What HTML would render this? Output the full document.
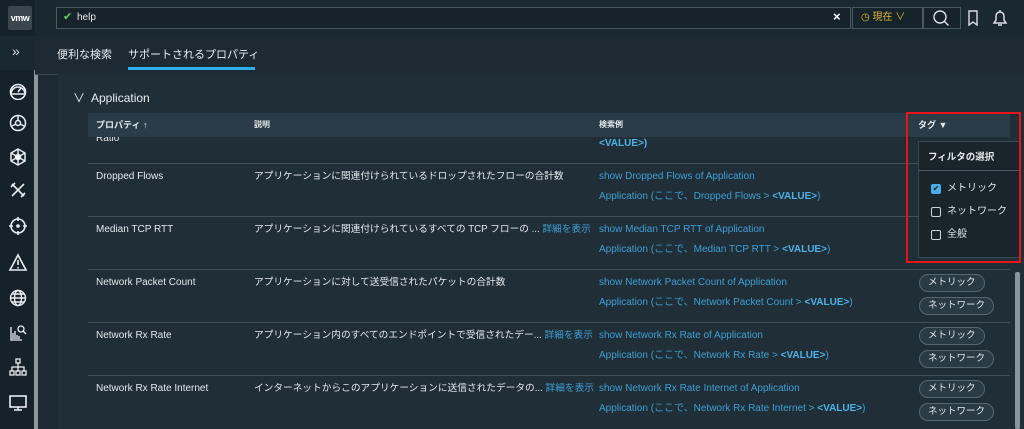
<!DOCTYPE html>
<html><head><meta charset="utf-8"><style>
*{margin:0;padding:0;box-sizing:border-box}
body{width:1024px;height:429px;overflow:hidden;background:#1d2a33;font-family:"Liberation Sans","Noto Sans CJK JP",sans-serif;color:#e3e8eb;position:relative;font-size:10px;line-height:12px}
.abs{position:absolute}
#side{left:0;top:0;width:35px;height:429px;background:#16222a}
#top{left:35px;top:0;width:989px;height:36px;background:#1a2830}
#tabs{left:35px;top:36px;width:989px;height:38px;background:#1d2a33}
.ic{position:absolute;left:8px;width:20px;height:20px}
#panel{left:58px;top:74px;width:966px;height:355px;background:#202e38}
.row{position:absolute;left:88px;width:922px;height:53px;border-top:1px solid #3e4f5a}
.c1{position:absolute;left:8px;top:7px;font-size:10px;color:#e3e8eb}
.c2{position:absolute;left:166px;top:7px;font-size:9.7px;color:#e3e8eb;white-space:nowrap}
.c3{position:absolute;left:511px;top:7px;font-size:10px;color:#3f9fd3}
.c4{position:absolute;left:511px;top:27px;font-size:10px;color:#3f9fd3}
.c4 b{color:#4fb2e6}
.more{color:#3f9fd3}
.pill{position:absolute;left:831px;height:18px;border:1px solid #56666f;border-radius:9px;background:#2b3b45;font-size:9.5px;padding:2px 8px;color:#e3e8eb;white-space:nowrap}
</style></head><body>
<div id="side" class="abs">
 <div class="abs" style="left:8px;top:6px;width:24px;height:24px;background:#3a464d;border-radius:2px;font-size:9px;font-weight:bold;color:#fff;text-align:center;line-height:24px;letter-spacing:-0.5px">vmw</div>
 <div class="abs" style="left:0;top:36px;width:35px;height:34px;background:#1a2830"></div>
 <div class="abs" style="left:12px;top:45px;font-size:14px;color:#dde">»</div>
 <div class="abs" style="left:34px;top:70px;width:4px;height:359px;background:#8b969c"></div>
 <svg class="ic" style="top:80px" viewBox="0 0 20 20" fill="none" stroke="#e8eef2" stroke-width="1.6"><path d="M3 14a7 7 0 1 1 14 0"/><path d="M3 14h14M10 12l3-4"/><circle cx="10" cy="12" r="7.5"/></svg>
 <svg class="ic" style="top:113px" viewBox="0 0 20 20" fill="none" stroke="#e8eef2" stroke-width="1.5"><circle cx="10" cy="10" r="7.5"/><path d="M10 3v4M4 13l4-2M16 13l-4-2"/><circle cx="10" cy="10" r="2.5"/></svg>
 <svg class="ic" style="top:147px" viewBox="0 0 20 20" fill="none" stroke="#e8eef2" stroke-width="1.5"><path d="M10 2l7 4v8l-7 4-7-4V6z"/><path d="M10 2v16M3 6l14 8M17 6L3 14"/><circle cx="10" cy="10" r="2.5" fill="#fff"/></svg>
 <svg class="ic" style="top:180px" viewBox="0 0 20 20" fill="none" stroke="#e8eef2" stroke-width="1.6"><path d="M4 4l12 12M16 4L4 16M3 7l4-4M13 17l4-4"/></svg>
 <svg class="ic" style="top:216px" viewBox="0 0 20 20" fill="none" stroke="#e8eef2" stroke-width="1.6"><circle cx="10" cy="10" r="7"/><path d="M10 1v4M10 15v4M1 10h4M15 10h4"/><circle cx="10" cy="10" r="1" fill="#fff"/></svg>
 <svg class="ic" style="top:253px" viewBox="0 0 20 20" fill="none" stroke="#e8eef2" stroke-width="1.6"><path d="M10 2L18 17H2z"/><path d="M10 7v5M10 14v1.5"/></svg>
 <svg class="ic" style="top:288px" viewBox="0 0 20 20" fill="none" stroke="#e8eef2" stroke-width="1.4"><circle cx="10" cy="10" r="7.5"/><ellipse cx="10" cy="10" rx="3.5" ry="7.5"/><path d="M2.5 10h15M4 6h12M4 14h12"/></svg>
 <svg class="ic" style="top:322px" viewBox="0 0 20 20" fill="none" stroke="#e8eef2" stroke-width="1.3"><path d="M3 5v13h11M5 17v-6M7 17v-8M9 17v-4M11 17v-3"/><circle cx="13" cy="7" r="3"/><path d="M15 9l3 3"/></svg>
 <svg class="ic" style="top:357px" viewBox="0 0 20 20" fill="none" stroke="#e8eef2" stroke-width="1.3"><rect x="8" y="2" width="4" height="4"/><rect x="2" y="14" width="4" height="4"/><rect x="8" y="14" width="4" height="4"/><rect x="14" y="14" width="4" height="4"/><path d="M10 6v8M4 14v-4h12v4"/></svg>
 <svg class="ic" style="top:393px" viewBox="0 0 20 20" fill="none" stroke="#e8eef2" stroke-width="1.6"><rect x="2" y="3" width="16" height="11"/><path d="M10 14v3M6 17h8"/></svg>
</div>
<div id="top" class="abs">
 <div class="abs" style="left:21px;top:7px;width:795px;height:22px;border:1px solid #4a5a64;background:#17232a"></div>
 <div class="abs" style="left:28px;top:11px;font-size:11px;color:#5fcf5f">✔</div>
 <div class="abs" style="left:42px;top:12px;font-size:10px;color:#e8ecef">help</div>
 <div class="abs" style="left:798px;top:11px;font-size:13px;font-weight:bold;color:#fff">×</div>
 <div class="abs" style="left:817px;top:7px;width:71px;height:22px;border:1px solid #4a5a64;background:#17232a"></div>
 <div class="abs" style="left:826px;top:12px;font-size:10px;color:#e0b838">◷ 現在 ∨</div>
 <div class="abs" style="left:888px;top:7px;width:38px;height:22px;border:1px solid #4a5a64;background:#17232a"></div>
 <svg class="abs" style="left:897px;top:9px" width="18" height="18" viewBox="0 0 18 18" fill="none" stroke="#dde" stroke-width="1.4"><circle cx="8" cy="8" r="6"/><path d="M12.5 12.5l4 4"/></svg>
 <svg class="abs" style="left:932px;top:10px" width="12" height="16" viewBox="0 0 12 16" fill="none" stroke="#dde" stroke-width="1.4"><path d="M2 1h8v14l-4-3-4 3z"/></svg>
 <svg class="abs" style="left:955px;top:8px" width="20" height="20" viewBox="0 0 20 20" fill="none" stroke="#dde" stroke-width="1.5"><path d="M4 15h12l-2-3V8a4 4 0 0 0-8 0v4z"/><path d="M8 17h4M10 2v2"/></svg>
</div>
<div id="tabs" class="abs">
 <div class="abs" style="left:22px;top:13px;font-size:11px;color:#e8ecef">便利な検索</div>
 <div class="abs" style="left:93px;top:13px;font-size:11px;color:#e8ecef">サポートされるプロパティ</div>
 <div class="abs" style="left:93px;top:31px;width:127px;height:3px;background:#2fb0ea"></div>
</div>
<div class="abs" style="left:35px;top:74px;width:989px;height:1px;background:#3a4a55"></div>
<div id="panel" class="abs"></div>
<div class="abs" style="left:73px;top:91px;font-size:12px;line-height:14px;color:#e8ecef">∨&nbsp; Application</div>
<div class="abs" style="left:88px;top:113px;width:922px;height:24px;background:#2a3c47">
 <div class="abs" style="left:8px;top:6px;font-size:9px;font-weight:bold">プロパティ ↑</div>
 <div class="abs" style="left:166px;top:6px;font-size:8px;font-weight:bold">説明</div>
 <div class="abs" style="left:511px;top:6px;font-size:8px;font-weight:bold">検索例</div>
 <div class="abs" style="left:830px;top:6px;font-size:9px;font-weight:bold">タグ ▼</div>
</div>
<div class="abs" style="left:88px;top:137px;width:922px;height:26px;overflow:hidden">
 <div class="abs" style="left:8px;top:-4px;font-size:10px">Ratio</div>
 <div class="abs" style="left:511px;top:1px;font-size:10px;color:#4fb2e6;font-weight:bold">&lt;VALUE&gt;)</div>
</div>
<div class="row" style="top:163px"><div class="c1">Dropped Flows</div><div class="c2">アプリケーションに関連付けられているドロップされたフローの合計数</div><div class="c3">show Dropped Flows of Application</div><div class="c4">Application (ここで、Dropped Flows &gt; <b>&lt;VALUE&gt;</b>)</div></div>
<div class="row" style="top:216px"><div class="c1">Median TCP RTT</div><div class="c2">アプリケーションに関連付けられているすべての TCP フローの ... <span class="more">詳細を表示</span></div><div class="c3">show Median TCP RTT of Application</div><div class="c4">Application (ここで、Median TCP RTT &gt; <b>&lt;VALUE&gt;</b>)</div></div>
<div class="row" style="top:269px"><div class="c1">Network Packet Count</div><div class="c2">アプリケーションに対して送受信されたパケットの合計数</div><div class="c3">show Network Packet Count of Application</div><div class="c4">Application (ここで、Network Packet Count &gt; <b>&lt;VALUE&gt;</b>)</div>
 <div class="pill" style="top:4px">メトリック</div><div class="pill" style="top:27px">ネットワーク</div></div>
<div class="row" style="top:322px"><div class="c1">Network Rx Rate</div><div class="c2">アプリケーション内のすべてのエンドポイントで受信されたデー... <span class="more">詳細を表示</span></div><div class="c3">show Network Rx Rate of Application</div><div class="c4">Application (ここで、Network Rx Rate &gt; <b>&lt;VALUE&gt;</b>)</div>
 <div class="pill" style="top:4px">メトリック</div><div class="pill" style="top:27px">ネットワーク</div></div>
<div class="row" style="top:375px"><div class="c1">Network Rx Rate Internet</div><div class="c2">インターネットからこのアプリケーションに送信されたデータの... <span class="more">詳細を表示</span></div><div class="c3">show Network Rx Rate Internet of Application</div><div class="c4">Application (ここで、Network Rx Rate Internet &gt; <b>&lt;VALUE&gt;</b>)</div>
 <div class="pill" style="top:4px">メトリック</div><div class="pill" style="top:27px">ネットワーク</div></div>
<div class="abs" style="left:1015px;top:272px;width:5px;height:157px;background:#8b969c;border-radius:2px"></div>
<div class="abs" style="left:918px;top:141px;width:102px;height:117px;background:#1a242b;border:1px solid #3a4a55">
 <div class="abs" style="left:9px;top:10px;font-size:9.5px;font-weight:bold">フィルタの選択</div>
 <div class="abs" style="left:0;top:28px;width:102px;height:1px;background:#4a5a64"></div>
 <div class="abs" style="left:12px;top:42px;width:10px;height:10px;background:#49aee6;border-radius:2px;font-size:8px;color:#123;line-height:10px;text-align:center">✔</div>
 <div class="abs" style="left:28px;top:41px;font-size:10px">メトリック</div>
 <div class="abs" style="left:12px;top:65px;width:10px;height:10px;border:1px solid #cfd6da;border-radius:2px"></div>
 <div class="abs" style="left:28px;top:64px;font-size:10px">ネットワーク</div>
 <div class="abs" style="left:12px;top:88px;width:10px;height:10px;border:1px solid #cfd6da;border-radius:2px"></div>
 <div class="abs" style="left:28px;top:87px;font-size:10px">全般</div>
</div>
<div class="abs" style="left:906px;top:112px;width:115px;height:151px;border:2px solid #e8141a"></div>
</body></html>
